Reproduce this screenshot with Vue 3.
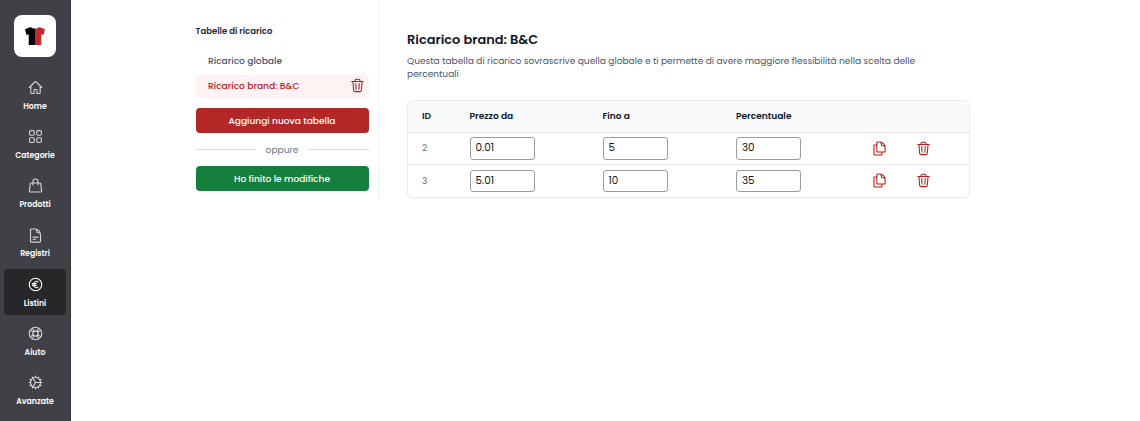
<script setup>
import { ref } from 'vue'

const navItems = [
  { key: 'home', label: 'Home' },
  { key: 'grid', label: 'Categorie' },
  { key: 'bag', label: 'Prodotti' },
  { key: 'doc', label: 'Registri' },
  { key: 'euro', label: 'Listini', active: true },
  { key: 'help', label: 'Aiuto' },
  { key: 'gear', label: 'Avanzate' },
]

const rows = ref([
  { id: 2, from: '0.01', to: '5', percent: '30' },
  { id: 3, from: '5.01', to: '10', percent: '35' },
])

const teeth = Array.from({ length: 12 }, (_, i) => i * 30)
</script>

<template>
  <div class="app">
    <aside class="sidebar">
      <div class="logo">
        <svg width="22" height="20" viewBox="0 0 22 20">
          <path d="M6.600 1C8 2 9.300 2.500 11 2.500V19H4.700V8.300L2.500 9 1 3.300Z" fill="#050505" />
          <path d="M15.400 1C14 2 12.700 2.500 11 2.500V19h6.300V8.300l2.200.7L21 3.300Z" fill="#c42a2a" />
        </svg>
      </div>
      <nav class="nav">
        <a v-for="item in navItems" :key="item.key" class="nav-item" :class="{ active: item.active }">
          <svg class="nav-icon" viewBox="0 0 24 24">
            <template v-if="item.key === 'home'">
              <path d="M2 12 11.200 2.800a1.100 1.100 0 0 1 1.600 0L22 12M4.500 9.800v10.500c0 .7.500 1.200 1.200 1.200h4v-5.200c0-.7.500-1.200 1.200-1.200h2.200c.7 0 1.200.5 1.200 1.200v5.200h4c.7 0 1.200-.5 1.200-1.200V9.800" />
            </template>
            <template v-else-if="item.key === 'grid'">
              <rect x="2.500" y="2.500" width="7.500" height="7.500" rx="2" />
              <rect x="14" y="2.500" width="7.500" height="7.500" rx="2" />
              <rect x="2.500" y="14" width="7.500" height="7.500" rx="2" />
              <rect x="14" y="14" width="7.500" height="7.500" rx="2" />
            </template>
            <template v-else-if="item.key === 'bag'">
              <path d="M16 11V5.500a4 4 0 0 0-8 0V11M4.700 8h14.600c.6 0 1 .4 1.100 1l1.400 12c.1.700-.4 1.300-1.100 1.300H3.300c-.7 0-1.200-.6-1.100-1.300L3.600 9c.1-.6.500-1 1.100-1Z" />
            </template>
            <template v-else-if="item.key === 'doc'">
              <path d="M20 13.500v-2.800c0-1.800-1.400-3.200-3.200-3.200h-1.500c-.7 0-1.200-.5-1.200-1.200V4.700c0-1.800-1.400-3.200-3.200-3.200H5.200C4.500 1.500 4 2 4 2.700v18.600c0 .7.500 1.200 1.200 1.200h13.600c.7 0 1.200-.5 1.200-1.200V10.500M11 1.500c5 0 9 4 9 9.500M8 14.500h8M8 18h4.500" />
            </template>
            <template v-else-if="item.key === 'euro'">
              <circle cx="12" cy="12" r="10" />
              <path d="M16 7.800c-2.800-2.200-6.400-.3-6.400 4.200s3.600 6.400 6.400 4.200M7 10.600h6M7 13.400h6" />
            </template>
            <template v-else-if="item.key === 'help'">
              <circle cx="12" cy="12" r="10" />
              <circle cx="12" cy="12" r="4.200" />
              <path d="m9.800 8.400-3-4.800M14.200 8.400l3-4.800M8.400 9.800 3.600 6.800M15.600 9.800l4.800-3M8.400 14.200l-4.800 3M15.600 14.200l4.800 3M9.800 15.600l-3 4.800M14.200 15.600l3 4.800" />
            </template>
            <template v-else>
              <circle cx="12" cy="12" r="8" />
              <path v-for="a in teeth" :key="a" d="M12 4V1.800" :transform="`rotate(${a} 12 12)`" />
              <path d="M12 12h8M12 12 8 5.100M12 12l-4 6.900" />
            </template>
          </svg>
          <span class="nav-label">{{ item.label }}</span>
        </a>
      </nav>
    </aside>

    <section class="tables">
      <h2 class="tables-title">Tabelle di ricarico</h2>
      <a class="table-link global">Ricarico globale</a>
      <a class="table-link selected">
        <span>Ricarico brand: B&amp;C</span>
        <svg class="icon trash" viewBox="0 0 24 24">
          <path d="m14.700 9-.35 9M9.600 18l-.35-9M19.200 5.800 18.200 19.700A2.200 2.200 0 0 1 16 21.800H8a2.200 2.200 0 0 1-2.200-2.100L4.800 5.800M2.800 5.600h18.400M8 5.300V4a2 2 0 0 1 2-2h4a2 2 0 0 1 2 2v1.300" />
        </svg>
      </a>
      <button class="button red">Aggiungi nuova tabella</button>
      <div class="divider"><span>oppure</span></div>
      <button class="button green">Ho finito le modifiche</button>
    </section>

    <main class="content">
      <h1>Ricarico brand: B&amp;C</h1>
      <p>Questa tabella di ricarico sovrascrive quella globale e ti permette di avere maggiore flessibilità nella scelta delle percentuali</p>
      <div class="card">
        <div class="row head">
          <span>ID</span>
          <span>Prezzo da</span>
          <span>Fino a</span>
          <span>Percentuale</span>
        </div>
        <div v-for="row in rows" :key="row.id" class="row">
          <span class="id">{{ row.id }}</span>
          <input v-model="row.from" />
          <input v-model="row.to" />
          <input v-model="row.percent" />
          <svg class="icon" viewBox="0 0 24 24">
            <path d="M15.800 17.700v3.500c0 .7-.5 1.100-1.100 1.100H4.200c-.6 0-1.100-.5-1.100-1.100V7.500c0-.7.500-1.200 1.100-1.200h3.500M15.800 17.700h4.100c.6 0 1.100-.5 1.100-1.100V10.500c0-5-3.800-8.800-8.600-8.800H8.900c-.7 0-1.200.5-1.200 1.100v13.800c0 .6.500 1.100 1.200 1.100ZM21 12.500v-2c0-1.700-1.300-3-3-3h-1.600c-.7 0-1.200-.5-1.200-1.100V4.800c0-1.700-1.200-3.100-2.800-3.100" />
          </svg>
          <svg class="icon" viewBox="0 0 24 24">
            <path d="m14.700 9-.35 9M9.600 18l-.35-9M19.200 5.800 18.200 19.700A2.200 2.200 0 0 1 16 21.800H8a2.200 2.200 0 0 1-2.200-2.100L4.800 5.800M2.800 5.600h18.400M8 5.300V4a2 2 0 0 1 2-2h4a2 2 0 0 1 2 2v1.300" />
          </svg>
        </div>
      </div>
    </main>
  </div>
</template>

<style>
body { margin: 0; background: #fff; }
</style>

<style scoped>
* { box-sizing: border-box; }
.app {
  display: flex;
  align-items: flex-start;
  width: 1140px;
  height: 421px;
  overflow: hidden;
  font-family: Poppins, Inter, "Open Sans", sans-serif;
  color: #0f172a;
}
.sidebar {
  width: 71px;
  height: 421px;
  padding: 15px 4px 0;
  background: #404047;
  border-right: 1px solid #34343b;
  flex: none;
}
.logo {
  display: flex;
  align-items: center;
  justify-content: center;
  width: 42px;
  height: 41.500px;
  margin-left: 10px;
  border-radius: 8px;
  background: #fff;
}
.nav {
  display: flex;
  flex-direction: column;
  gap: 2.800px;
  width: 62px;
  padding-top: 15px;
}
.nav-item {
  display: flex;
  flex-direction: column;
  align-items: center;
  height: 46.500px;
  padding-top: 8.200px;
  border-radius: 4px;
  color: #d4d4d8;
}
.nav-item.active { background: #27272a; color: #fff; }
.nav-icon {
  width: 15px;
  height: 15px;
  fill: none;
  stroke: currentColor;
  stroke-width: 1.800;
  stroke-linecap: round;
  stroke-linejoin: round;
}
.nav-label {
  margin-top: 5.900px;
  font-size: 7.770px;
  font-weight: 600;
  line-height: 12px;
  color: #fff;
  white-space: nowrap;
}
.tables {
  flex: none;
  width: 308px;
  height: 200px;
  padding: 24px 9.500px 0 124.500px;
  border-right: 1px solid #f3f4f6;
}
.tables-title {
  margin: 0;
  font-size: 8.500px;
  font-weight: 600;
  line-height: 15px;
  color: #1f2937;
  white-space: nowrap;
}
.table-link {
  display: flex;
  align-items: center;
  justify-content: space-between;
  height: 23px;
  padding: 0 3.500px 0 12.500px;
  border-radius: 4px;
  font-size: 9.100px;
  font-weight: 500;
  white-space: nowrap;
}
.global { margin-top: 10px; color: #475569; }
.selected { margin-top: 2.500px; background: #fef2f2; color: #b91c1c; }
.icon {
  width: 15px;
  height: 15px;
  fill: none;
  stroke: #b91c1c;
  stroke-width: 1.700;
  stroke-linecap: round;
  stroke-linejoin: round;
}
.trash { margin-top: -2px; }
.button {
  display: block;
  width: 100%;
  height: 25px;
  padding: 0;
  border: 0;
  border-radius: 4px;
  color: #fff;
  font-family: inherit;
  font-size: 9.060px;
  font-weight: 500;
  line-height: 25px;
}
.red { margin-top: 10.500px; background: #b32727; }
.green { background: #15803d; }
.divider {
  display: flex;
  align-items: center;
  gap: 5px;
  height: 33px;
  color: #64748b;
  font-size: 9.060px;
}
.divider span { padding: 0 0; }
.divider::before, .divider::after {
  content: "";
  flex: 1;
  height: 1px;
  background: #d9dbdf;
}
.divider { column-gap: 5px; }
.content {
  width: 591px;
  padding: 31px 0 0 28px;
}
h1 {
  margin: 0;
  font-size: 12.950px;
  font-weight: 600;
  line-height: 18px;
  white-space: nowrap;
}
p {
  width: 520px;
  margin: 5px 0 0;
  font-size: 9.070px;
  line-height: 13px;
  color: #475569;
}
.card {
  width: 563px;
  height: 98px;
  margin-top: 20px;
  border: 1px solid #e8eaed;
  border-radius: 6px;
  overflow: hidden;
  box-shadow: 0 1px 2px rgba(0, 0, 0, 0.05);
}
.row {
  display: grid;
  grid-template-columns: 47.500px 133px 133.500px 136px 44px 40px;
  align-items: center;
  height: 32.500px;
  padding-left: 14px;
  border-top: 1px solid #e8eaed;
}
.head {
  height: 30.500px;
  border-top: 0;
  background: #f8fafc;
  font-size: 9.060px;
  font-weight: 600;
}
.id { font-size: 9.060px; color: #64748b; }
input {
  width: 65px;
  height: 22.500px;
  padding: 0 5px;
  border: 1px solid #989ca4;
  border-radius: 3px;
  outline: 0;
  background: #fff;
  font-family: inherit;
  font-size: 10.360px;
  color: #111827;
}
.divider span { margin: 0 4.500px; }
</style>
